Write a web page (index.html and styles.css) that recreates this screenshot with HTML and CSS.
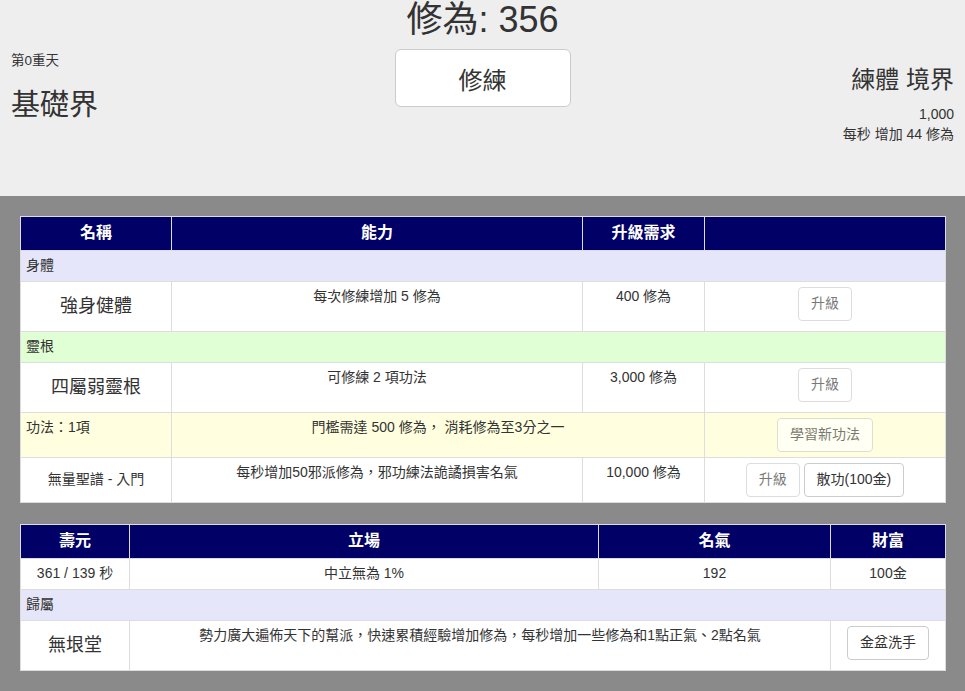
FILE: index.html
```html
<!DOCTYPE html>
<html lang="zh-Hant">
<head>
<meta charset="UTF-8">
<meta name="viewport" content="width=device-width, initial-scale=1.0">
<title>修仙</title>
<link rel="stylesheet" href="styles.css">
</head>
<body>
    <div class="top-panel">
        <div class="realm-box">
            <div class="heaven">第0重天</div>
            <div class="realm-name">基礎界</div>
        </div>
        <div class="cultivate-box">
            <h1 class="cultivation">修為: 356</h1>
            <button class="cultivate-btn">修練</button>
        </div>
        <div class="stage-box">
            <div class="stage-name">練體 境界</div>
            <div class="stage-line">1,000</div>
            <div class="stage-line">每秒 增加 44 修為</div>
        </div>
    </div>

    <div class="main-panel">
        <table class="info-table">
            <colgroup>
                <col style="width: 151px">
                <col style="width: 411px">
                <col style="width: 122px">
                <col style="width: 241px">
            </colgroup>
            <thead>
                <tr><th>名稱</th><th>能力</th><th>升級需求</th><th></th></tr>
            </thead>
            <tbody>
                <tr class="group-body"><td colspan="4" class="label">身體</td></tr>
                <tr>
                    <td class="name"><h4>強身健體</h4></td>
                    <td>每次修練增加 5 修為</td>
                    <td>400 修為</td>
                    <td><button class="btn" disabled>升級</button></td>
                </tr>
                <tr class="group-root"><td colspan="4" class="label">靈根</td></tr>
                <tr>
                    <td class="name"><h4>四屬弱靈根</h4></td>
                    <td>可修練 2 項功法</td>
                    <td>3,000 修為</td>
                    <td><button class="btn" disabled>升級</button></td>
                </tr>
                <tr class="group-skill">
                    <td class="label">功法：1項</td>
                    <td colspan="2">門檻需達 500 修為， 消耗修為至3分之一</td>
                    <td><button class="btn" disabled>學習新功法</button></td>
                </tr>
                <tr>
                    <td class="name">無量聖譜 - 入門</td>
                    <td>每秒增加50邪派修為，邪功練法詭譎損害名氣</td>
                    <td>10,000 修為</td>
                    <td><button class="btn" disabled>升級</button> <button class="btn">散功(100金)</button></td>
                </tr>
            </tbody>
        </table>

        <table class="info-table">
            <colgroup>
                <col style="width: 109px">
                <col style="width: 469px">
                <col style="width: 232px">
                <col style="width: 115px">
            </colgroup>
            <thead>
                <tr><th>壽元</th><th>立場</th><th>名氣</th><th>財富</th></tr>
            </thead>
            <tbody>
                <tr>
                    <td>361 / 139 秒</td>
                    <td>中立無為 1%</td>
                    <td>192</td>
                    <td>100金</td>
                </tr>
                <tr class="group-body"><td colspan="4" class="label">歸屬</td></tr>
                <tr>
                    <td class="name"><h4>無垠堂</h4></td>
                    <td colspan="2">勢力廣大遍佈天下的幫派，快速累積經驗增加修為，每秒增加一些修為和1點正氣、2點名氣</td>
                    <td><button class="btn">金盆洗手</button></td>
                </tr>
            </tbody>
        </table>
    </div>
</body>
</html>
```

FILE: styles.css
```css
* {
    box-sizing: border-box;
}
body {
    margin: 0;
    background-color: #8a8a8a;
    color: #333;
    font-family: "Liberation Sans", "Noto Sans CJK TC", sans-serif;
    font-size: 14px;
    line-height: 1.42857;
}
.top-panel {
    background-color: #eee;
    height: 196px;
    padding: 0 11px;
    display: grid;
    grid-template-columns: 1fr auto 1fr;
}
.heaven {
    font-size: 13.5px;
    line-height: 17px;
    margin-top: 52px;
}
.realm-name {
    font-size: 29px;
    line-height: 33px;
    margin-top: 20px;
}
.cultivate-box {
    text-align: center;
}
.cultivation {
    margin: 0;
    font-size: 36px;
    line-height: 40px;
    font-weight: normal;
}
.cultivate-btn {
    margin-top: 9px;
    width: 176px;
    height: 58px;
    font-family: inherit;
    font-size: 24px;
    color: #333;
    background-color: #fff;
    border: 1px solid #ccc;
    border-radius: 6px;
}
.stage-box {
    text-align: right;
}
.stage-name {
    font-size: 24px;
    line-height: 26px;
    margin-top: 67px;
    margin-bottom: 12px;
}
.main-panel {
    padding: 20px;
}
.info-table {
    width: 100%;
    table-layout: fixed;
    border-collapse: collapse;
    background-color: #fff;
    border: 1px solid #ddd;
    margin-bottom: 21px;
}
.info-table th {
    background-color: #006;
    color: #fff;
    font-size: 16px;
    font-weight: bold;
    padding: 5px;
    border: 1px solid #ddd;
    text-align: center;
}
.info-table td {
    padding: 5px;
    border: 1px solid #ddd;
    text-align: center;
    vertical-align: top;
}
.info-table td.label {
    text-align: left;
}
.info-table td.name {
    vertical-align: middle;
}
.info-table h4 {
    margin: 10px 0;
    font-size: 18px;
    line-height: 19px;
    font-weight: normal;
}
.group-body td {
    background-color: #e6e6fa;
}
.group-root td {
    background-color: #e0ffd4;
}
.group-skill td {
    background-color: #ffffe0;
}
.btn {
    font-family: inherit;
    font-size: 14px;
    line-height: 1.42857;
    color: #333;
    background-color: #fff;
    border: 1px solid #ccc;
    border-radius: 4px;
    padding: 6px 12px;
}
.btn:disabled {
    opacity: 0.65;
}
```
